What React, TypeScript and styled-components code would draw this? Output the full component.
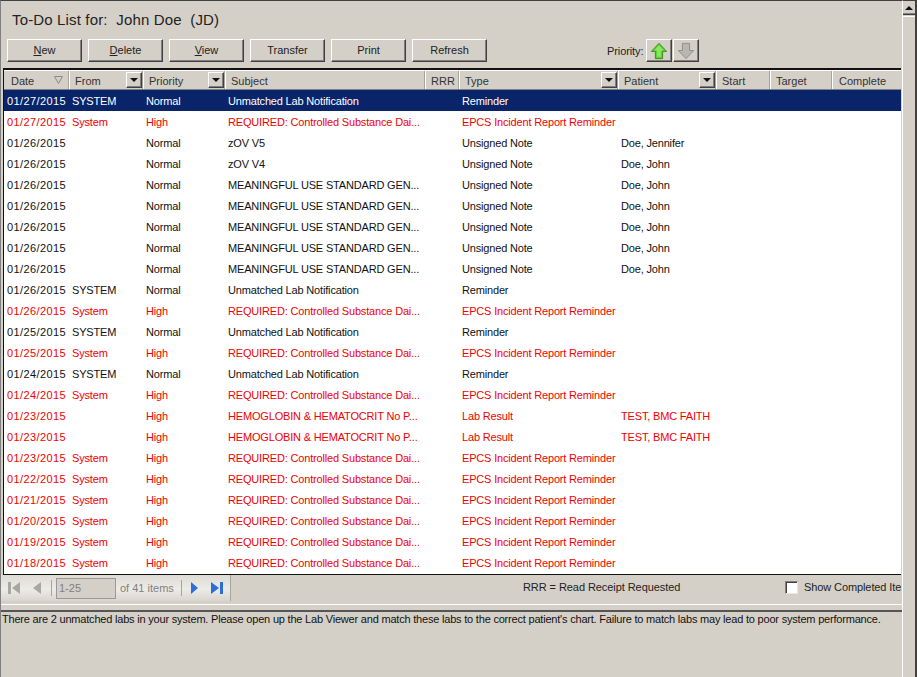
import React from "react";
import styled, { createGlobalStyle } from "styled-components";

const Global = createGlobalStyle`
  html, body { margin: 0; padding: 0; background: #d4d0c8; overflow: hidden; }
  #root { width: 917px; height: 677px; }
`;

const COLS = "65px 74px 82px 200px 34px 159px 98px 54px 62px 1fr";
const FONT = `"Liberation Sans", Arial, sans-serif`;

const Window = styled.div`
  width: 917px; height: 677px; display: flex; background: #d4d0c8;
  font-family: ${FONT}; font-size: 11px; color: #111; overflow: hidden;
`;
const Main = styled.div`
  width: 902px; display: flex; flex-direction: column; flex: none;
  border-top: 1px solid #404040; border-left: 1px solid #808080; box-sizing: border-box;
  overflow: hidden;
`;
const Title = styled.div`
  height: 38px; padding: 10px 0 0 11px; box-sizing: border-box; font-size: 15px; line-height: 18px;
  letter-spacing: .01em; color: #222; white-space: pre;
`;
const Toolbar = styled.div`
  height: 23px; display: flex; align-items: center; gap: 6px; padding-left: 6px; flex: none;
`;
const Btn = styled.button`
  width: 75px; height: 23px; box-sizing: border-box; padding: 0 0 2px; margin: 0; background: #d4d0c8;
  border: 1px solid; border-color: #fff #404040 #404040 #fff; box-shadow: inset -1px -1px 0 #808080;
  font: 11px ${FONT}; color: #222;
  u { text-decoration: underline; }
`;
const PriorityLabel = styled.span`
  margin-left: 114px; width: 33px; white-space: nowrap; letter-spacing: -.1px; color: #222;
`;
const IconBtn = styled.button<{ $first?: boolean }>`
  width: 26px; height: 23px; box-sizing: border-box; padding: 0; margin: 0 0 0 ${p => p.$first ? 0 : -5}px;
  background: #d4d0c8; display: flex; align-items: center; justify-content: center;
  border: 1px solid; border-color: #fff #404040 #404040 #fff; box-shadow: inset -1px -1px 0 #808080;
`;
const Grid = styled.div`
  margin: 6px 0 0 2px; padding-bottom: 1px; border-top: 2px solid #111; border-bottom: 1px solid #111; border-left: 1px solid #111;
  background: #fff; flex: none; box-sizing: border-box; width: 898px;
`;
const HeaderRow = styled.div`
  display: grid; grid-template-columns: ${COLS}; height: 20px; background: #d4d0c8;
  border-top: 1px solid #fff; border-bottom: 1px solid #808080; box-sizing: border-box;
`;
const HeaderCell = styled.div`
  position: relative; padding-left: 6px; line-height: 20px; height: 18px; color: #333; white-space: nowrap;
  border-right: 1px solid #a8a49c; box-shadow: 1px 0 0 #fff; box-sizing: border-box;
  &:first-child { padding-left: 7px; }
  &:last-child { border-right: none; box-shadow: none; padding-left: 7px; }
`;
const SortMark = styled.svg`
  position: absolute; right: 5px; top: 5px;
`;
const Drop = styled.span`
  position: absolute; right: 0; top: 1px; width: 16px; height: 16px; box-sizing: border-box; background: #d4d0c8;
  border: 1px solid; border-color: #fff #404040 #404040 #fff; box-shadow: inset -1px -1px 0 #808080;
  display: flex; align-items: center; justify-content: center;
`;
const Row = styled.div<{ $selected?: boolean; $high?: boolean }>`
  display: grid; grid-template-columns: ${COLS}; height: 21px; line-height: 20px; letter-spacing: -.17px;
  background: ${p => p.$selected ? "#0a246a" : "#fff"};
  color: ${p => p.$selected ? "#fff" : p.$high ? "#f00000" : "#111"};
`;
const Cell = styled.div`
  padding: 1px 0 0 3px; white-space: nowrap; overflow: hidden;
`;
const DateCell = styled(Cell)`
  letter-spacing: .4px;
`;
const Footer = styled.div`
  height: 29px; display: flex; align-items: flex-start; flex: none; position: relative;
  border-bottom: 1px solid #fff; box-sizing: content-box;
`;
const Pager = styled.div`
  width: 230px; height: 26px; display: flex; align-items: center; box-sizing: border-box; flex: none;
  background: linear-gradient(#dedbd5, #ecebe7 55%, #d8d5ce);
  border-right: 1px solid #a8a49c; color: #808080;
`;
const PagerIcon = styled.svg<{ $ml?: number }>`
  flex: none; margin-left: ${p => p.$ml || 0}px;
`;
const PagerSep = styled.span<{ $l: number; $r: number }>`
  width: 1px; height: 16px; background: #a8a49c; margin: 0 ${p => p.$r}px 0 ${p => p.$l}px; flex: none;
`;
const PageBox = styled.span`
  width: 60px; height: 21px; box-sizing: border-box; border: 1px solid #999; line-height: 19px; padding-left: 2px; background: #d4d0c8;
`;
const PagerCount = styled.span`
  margin-left: 4px; white-space: nowrap;
`;
const Legend = styled.div`
  margin-left: 292px; line-height: 24px; letter-spacing: -.07px; white-space: nowrap; color: #222;
`;
const ShowCompleted = styled.label`
  position: absolute; left: 784px; top: 4px; display: flex; align-items: center; gap: 6px; white-space: nowrap; color: #222;
  letter-spacing: -.1px; width: 116px; overflow: hidden; height: 16px;
`;
const CheckBox = styled.span`
  width: 13px; height: 13px; background: #fff; flex: none; box-sizing: border-box;
  border: 1px solid; border-color: #808080 #e8e6e0 #e8e6e0 #808080; box-shadow: inset 1px 1px 0 #404040;
`;
const Message = styled.div`
  margin-top: 5px; border-top: 2px solid #555; flex: 1; padding: 0 0 0 1px; line-height: 14px; letter-spacing: -.2px; color: #111; white-space: nowrap;
`;
const Scroll = styled.div`
  width: 15px; flex: none; display: flex; flex-direction: column; border-left: 1px solid #fff; border-right: 2px solid #404040; box-sizing: border-box;
  border-top: 1px solid #404040;
`;
const ScrollBtn = styled.div`
  height: 14px; box-sizing: border-box; background: #d4d0c8; display: flex; align-items: center; justify-content: center;
  border-bottom: 1px solid #404040; box-shadow: inset 0 -1px 0 #808080;
`;
const ScrollThumb = styled.div`
  flex: 1; background: #d4d0c8; border-top: 1px solid #fff; margin-top: 1px;
`;

const Up = ({ on }: { on: boolean }) => (
  <svg width="18" height="18" viewBox="0 0 20 19">
    {on ? (
      <path d="M10 1 L18.5 10 H14 V18 H6 V10 H1.5 Z" fill="#5fcf3a" stroke="#2f8a10" strokeWidth="1" />
    ) : (
      <path d="M6 1 H14 V9 H18.5 L10 18 L1.5 9 H6 Z" fill="#b8b6b0" stroke="#8c8a86" strokeWidth="1" />
    )}
    {on && <path d="M10 3 L15 9 H12 V16 H8 V9 H5 Z" fill="#8be85e" />}
  </svg>
);

const Tri = () => (
  <svg width="8" height="4" viewBox="0 0 8 4"><path d="M0 0H8L4 4Z" fill="#111" /></svg>
);

type R = [string, string, string, string, string, string];
const H = "REQUIRED: Controlled Substance Dai...";
const EP = "EPCS Incident Report Reminder";
const MU = "MEANINGFUL USE STANDARD GEN...";
const UL = "Unmatched Lab Notification";
const HG = "HEMOGLOBIN & HEMATOCRIT No P...";
const rows: R[] = [
  ["01/27/2015", "SYSTEM", "Normal", UL, "Reminder", ""],
  ["01/27/2015", "System", "High", H, EP, ""],
  ["01/26/2015", "", "Normal", "zOV V5", "Unsigned Note", "Doe, Jennifer"],
  ["01/26/2015", "", "Normal", "zOV V4", "Unsigned Note", "Doe, John"],
  ["01/26/2015", "", "Normal", MU, "Unsigned Note", "Doe, John"],
  ["01/26/2015", "", "Normal", MU, "Unsigned Note", "Doe, John"],
  ["01/26/2015", "", "Normal", MU, "Unsigned Note", "Doe, John"],
  ["01/26/2015", "", "Normal", MU, "Unsigned Note", "Doe, John"],
  ["01/26/2015", "", "Normal", MU, "Unsigned Note", "Doe, John"],
  ["01/26/2015", "SYSTEM", "Normal", UL, "Reminder", ""],
  ["01/26/2015", "System", "High", H, EP, ""],
  ["01/25/2015", "SYSTEM", "Normal", UL, "Reminder", ""],
  ["01/25/2015", "System", "High", H, EP, ""],
  ["01/24/2015", "SYSTEM", "Normal", UL, "Reminder", ""],
  ["01/24/2015", "System", "High", H, EP, ""],
  ["01/23/2015", "", "High", HG, "Lab Result", "TEST, BMC FAITH"],
  ["01/23/2015", "", "High", HG, "Lab Result", "TEST, BMC FAITH"],
  ["01/23/2015", "System", "High", H, EP, ""],
  ["01/22/2015", "System", "High", H, EP, ""],
  ["01/21/2015", "System", "High", H, EP, ""],
  ["01/20/2015", "System", "High", H, EP, ""],
  ["01/19/2015", "System", "High", H, EP, ""],
  ["01/18/2015", "System", "High", H, EP, ""],
];

const headers: [string, "sort" | "drop" | null][] = [
  ["Date", "sort"], ["From", "drop"], ["Priority", "drop"], ["Subject", null], ["RRR", null],
  ["Type", "drop"], ["Patient", "drop"], ["Start", null], ["Target", null], ["Complete", null],
];

export default function App() {
  return (
    <Window>
      <Global />
      <Main>
        <Title>To-Do List for:  John Doe  (JD)</Title>
        <Toolbar>
          <Btn><u>N</u>ew</Btn>
          <Btn><u>D</u>elete</Btn>
          <Btn><u>V</u>iew</Btn>
          <Btn>Transfer</Btn>
          <Btn>Print</Btn>
          <Btn>Refresh</Btn>
          <PriorityLabel>Priority:</PriorityLabel>
          <IconBtn $first><Up on /></IconBtn>
          <IconBtn><Up on={false} /></IconBtn>
        </Toolbar>
        <Grid>
          <HeaderRow>
            {headers.map(([t, k]) => (
              <HeaderCell key={t}>
                {t}
                {k === "sort" && (
                  <SortMark width="9" height="8" viewBox="0 0 9 8">
                    <path d="M0.5 0.5H8.5L4.5 7.5Z" fill="none" stroke="#8a8a8a" />
                  </SortMark>
                )}
                {k === "drop" && <Drop><Tri /></Drop>}
              </HeaderCell>
            ))}
          </HeaderRow>
          {rows.map((r, i) => (
            <Row key={i} $selected={i === 0} $high={r[2] === "High"}>
              <DateCell>{r[0]}</DateCell>
              <Cell>{r[1]}</Cell>
              <Cell>{r[2]}</Cell>
              <Cell>{r[3]}</Cell>
              <Cell />
              <Cell>{r[4]}</Cell>
              <Cell>{r[5]}</Cell>
              <Cell /><Cell /><Cell />
            </Row>
          ))}
        </Grid>
        <Footer>
          <Pager>
            <PagerIcon $ml={5} width="16" height="16" viewBox="0 0 16 16"><path d="M2 2h3v12H2zM14 2v12L6 8z" fill="#a9a7a2" /></PagerIcon>
            <PagerIcon $ml={9} width="12" height="16" viewBox="0 0 12 16"><path d="M10 2v12L2 8z" fill="#a9a7a2" /></PagerIcon>
            <PagerSep $l={8} $r={4} />
            <PageBox>1-25</PageBox>
            <PagerCount>of 41 items</PagerCount>
            <PagerSep $l={7} $r={6} />
            <PagerIcon width="14" height="16" viewBox="0 0 14 16"><path d="M3 2v12l7-6z" fill="#2c6fd6" /></PagerIcon>
            <PagerIcon $ml={7} width="16" height="16" viewBox="0 0 16 16"><path d="M2 2v12l8-6zM11 2h3v12h-3z" fill="#2c6fd6" /></PagerIcon>
          </Pager>
          <Legend>RRR = Read Receipt Requested</Legend>
          <ShowCompleted><CheckBox />Show Completed Items</ShowCompleted>
        </Footer>
        <Message>There are 2 unmatched labs in your system. Please open up the Lab Viewer and match these labs to the correct patient's chart. Failure to match labs may lead to poor system performance.</Message>
      </Main>
      <Scroll>
        <ScrollBtn><svg width="8" height="4" viewBox="0 0 8 4"><path d="M4 0L8 4H0Z" fill="#111" /></svg></ScrollBtn>
        <ScrollThumb />
      </Scroll>
    </Window>
  );
}
